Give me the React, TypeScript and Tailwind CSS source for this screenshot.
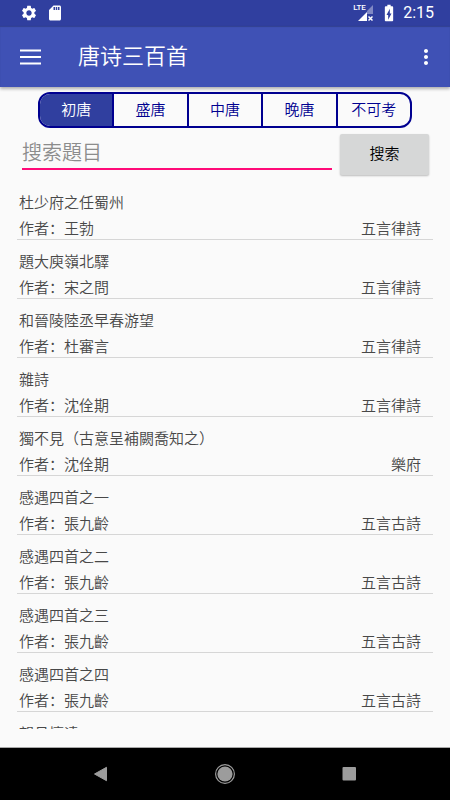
import { useState } from "react";
import { MdBatteryChargingFull, MdMenu, MdMoreVert, MdSdCard, MdSettings } from "react-icons/md";

type Poem = {
    title: string;
    author: string;
    form: string;
}

const periods = ["初唐", "盛唐", "中唐", "晚唐", "不可考"];

const poems: Poem[] = [
    { title: "杜少府之任蜀州", author: "王勃", form: "五言律詩" },
    { title: "題大庾嶺北驛", author: "宋之問", form: "五言律詩" },
    { title: "和晉陵陸丞早春游望", author: "杜審言", form: "五言律詩" },
    { title: "雜詩", author: "沈佺期", form: "五言律詩" },
    { title: "獨不見（古意呈補闕喬知之）", author: "沈佺期", form: "樂府" },
    { title: "感遇四首之一", author: "張九齡", form: "五言古詩" },
    { title: "感遇四首之二", author: "張九齡", form: "五言古詩" },
    { title: "感遇四首之三", author: "張九齡", form: "五言古詩" },
    { title: "感遇四首之四", author: "張九齡", form: "五言古詩" },
    { title: "望月懷遠", author: "張九齡", form: "五言律詩" },
];

const SignalIcon = () => (
    <svg viewBox="0 0 16 16" className="h-4 w-4" aria-hidden="true">
        <path d="M16 0v9H10V6z" fill="#8088c4" />
        <path d="M1 16L10 7v9z" fill="#fff" />
        <path d="M11.5 11.5l4 4m0-4l-4 4" stroke="#fff" strokeWidth="1.5" />
    </svg>
)

const StatusBar = () => (
    <div className="flex h-[26px] shrink-0 items-center bg-[#303f9f] pr-4 pl-5 text-white">
        <MdSettings className="mr-2 h-[18px] w-[18px]" />
        <MdSdCard className="h-[18px] w-[18px]" />
        <div className="relative mr-1.5 ml-auto">
            <span className="absolute top-0 -left-1 text-[8px] leading-[6px] font-medium">LTE</span>
            <SignalIcon />
        </div>
        <MdBatteryChargingFull className="mr-1 h-5 w-5" />
        <span className="text-base">2:15</span>
    </div>
)

const Toolbar = () => (
    <header className="z-10 flex h-[61px] shrink-0 items-center bg-[#3f51b5] pr-3 pl-[18px] text-white shadow-[inset_0_1px_1px_rgba(0,0,0,0.2),0_2px_3px_rgba(0,0,0,0.3)]">
        <button type="button" aria-label="菜单">
            <svg viewBox="0 0 24 24" className="h-6 w-6">
                <path d="M2 5.5h21M2 12h21M2 18.5h21" stroke="currentColor" strokeWidth="2" />
            </svg>
        </button>
        <h1 className="ml-9 text-[22px] leading-8 font-[350]">唐诗三百首</h1>
        <button type="button" aria-label="更多" className="ml-auto">
            <MdMoreVert className="h-6 w-6" />
        </button>
    </header>
)

const PoemRow = ({ title, author, form }: Poem) => (
    <li className="border-b border-[#d6d6d6] px-0.5 pt-2.5">
        <p className="leading-6">{title}</p>
        <div className="mt-1 flex justify-between pr-2.5 leading-5">
            <span>作者：{author}</span>
            <span>{form}</span>
        </div>
    </li>
)

const NavigationBar = () => (
    <nav className="flex h-[53px] shrink-0 items-center justify-center gap-[100px] border-t border-[#a8a8a8] bg-black">
        <button type="button" aria-label="返回">
            <svg viewBox="0 0 24 24" className="h-6 w-6">
                <path d="M5.5 12L17.5 5.3v13.4z" fill="#9c9c9c" stroke="#9c9c9c" strokeLinejoin="round" />
            </svg>
        </button>
        <button type="button" aria-label="主页">
            <svg viewBox="0 0 24 24" className="h-6 w-6">
                <circle cx="12" cy="12" r="9.4" fill="none" stroke="#9c9c9c" strokeWidth="1.2" />
                <circle cx="12" cy="12" r="7.6" fill="#9c9c9c" />
            </svg>
        </button>
        <button type="button" aria-label="最近">
            <svg viewBox="0 0 24 24" className="h-6 w-6">
                <rect x="5.5" y="5" width="13.5" height="13.5" rx="1" fill="#9c9c9c" />
            </svg>
        </button>
    </nav>
)

export default function App() {
    const [period, setPeriod] = useState("初唐");
    const [query, setQuery] = useState("");

    return (
        <div className="flex h-screen flex-col bg-[#fafafa] font-[Roboto,'Noto_Sans_CJK_SC',sans-serif]">
            <StatusBar />
            <Toolbar />
            <main className="flex min-h-0 flex-1 flex-col pt-[5px] pb-[18px]">
                <div className="mx-[38px] flex h-9 shrink-0 divide-x-2 divide-[#000090] overflow-hidden rounded-xl border-2 border-[#000090]">
                    {periods.map((name) => (
                        <button
                            key={name}
                            type="button"
                            aria-pressed={name === period}
                            onClick={() => setPeriod(name)}
                            className={`flex-1 text-[15px] font-[350] ${name === period ? 'bg-[#303f9f] text-white' : 'text-[#000090]'}`}
                        >
                            {name}
                        </button>
                    ))}
                </div>
                <form onSubmit={(e) => e.preventDefault()} className="mt-1.5 mr-[21px] ml-[22px] flex shrink-0 gap-2">
                    <input
                        type="text"
                        aria-label="搜索題目"
                        placeholder="搜索題目"
                        value={query}
                        onChange={(e) => setQuery(e.target.value)}
                        className="h-9 min-w-0 flex-1 border-b-2 border-[#ff0a78] pt-1 text-xl font-[350] outline-none placeholder:text-[#8c8c8c]"
                    />
                    <button type="submit" className="h-[41px] w-[89px] rounded-xs bg-[#d6d7d7] text-[15px] font-[350] text-black shadow-[0_1px_2px_rgba(0,0,0,0.25)]">
                        搜索
                    </button>
                </form>
                <ul className="mx-[17px] mt-1.5 min-h-0 flex-1 overflow-y-auto text-[15px] font-[350] text-[#484848] [scrollbar-width:none]">
                    {poems.map((poem) => (
                        <PoemRow key={poem.title} {...poem} />
                    ))}
                </ul>
            </main>
            <NavigationBar />
        </div>
    )
}
